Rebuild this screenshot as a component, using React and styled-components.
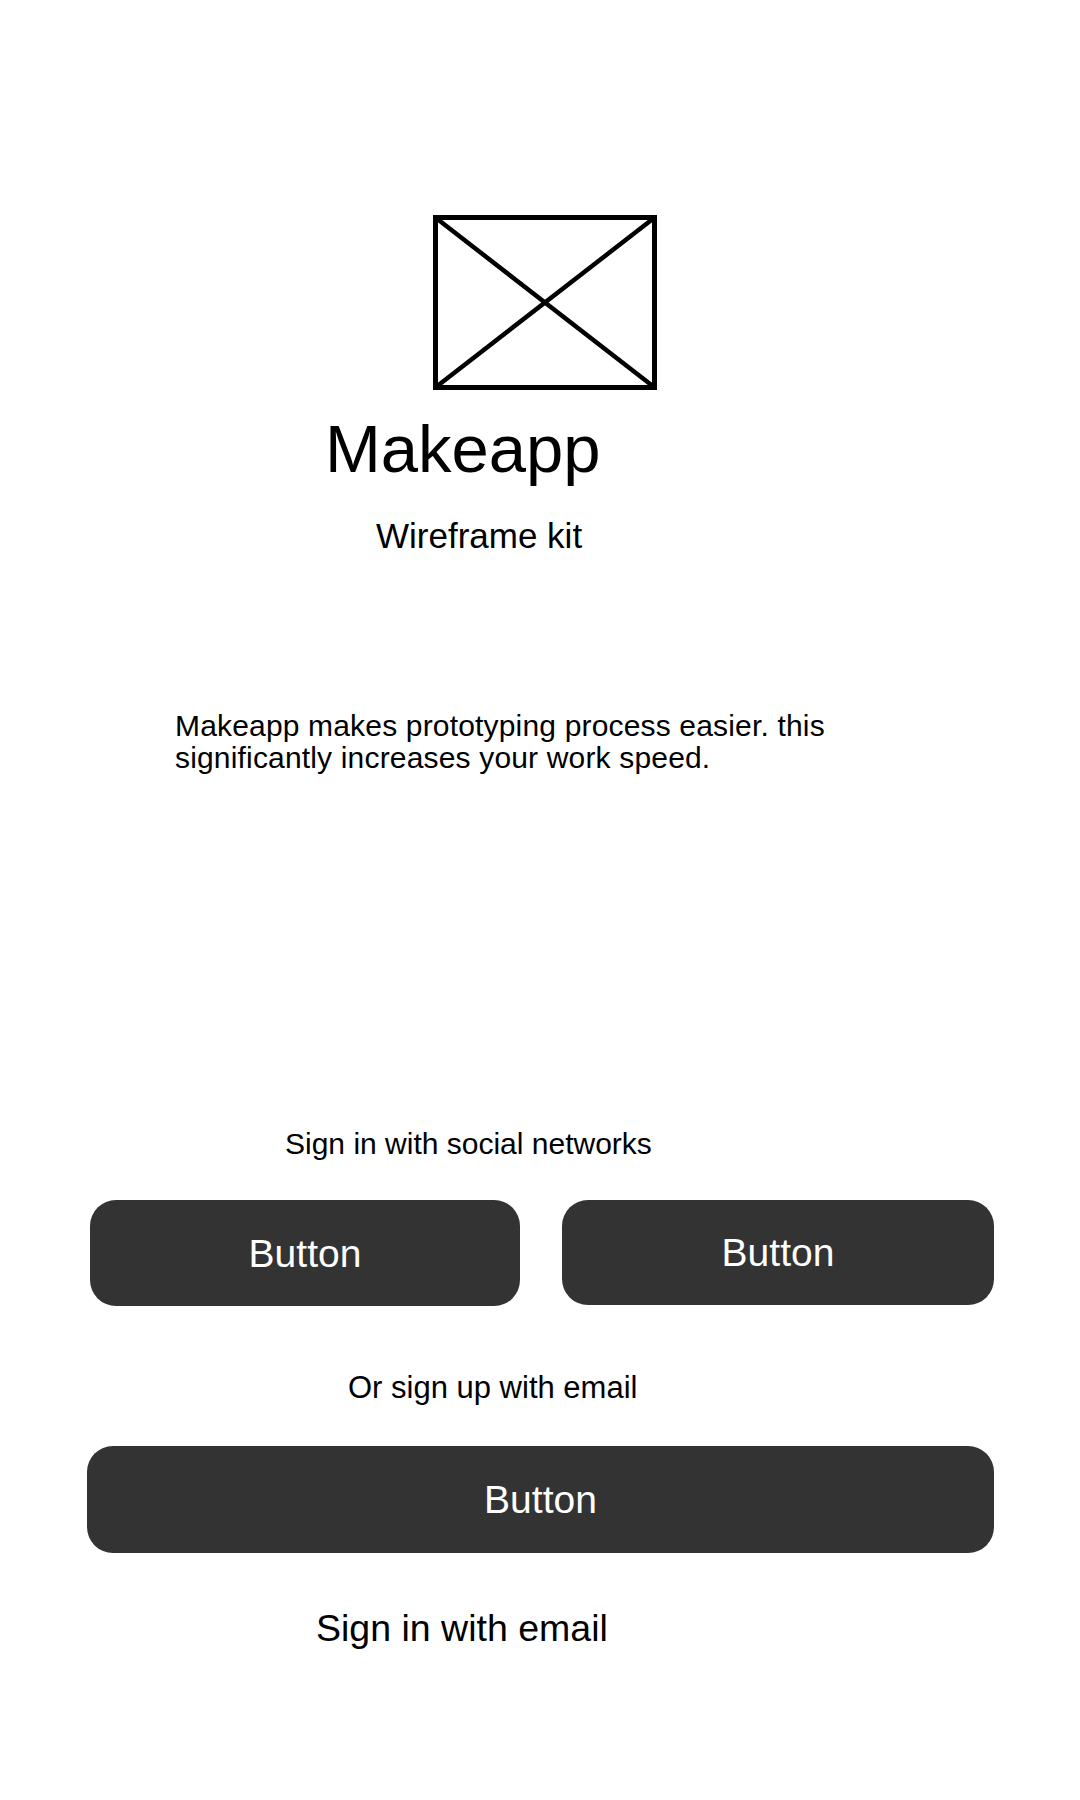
import React from "react";
import styled, { createGlobalStyle } from "styled-components";

const GlobalStyle = createGlobalStyle`
  html, body {
    margin: 0;
    padding: 0;
    background: #ffffff;
  }
  body {
    font-family: "Liberation Sans", Arial, Helvetica, sans-serif;
    color: #000000;
  }
`;

const Page = styled.div`
  width: 1080px;
  min-height: 1800px;
  display: flex;
  flex-direction: column;
  align-items: flex-start;
  padding-top: 215px;
  box-sizing: border-box;
`;

const PlaceholderWrapper = styled.div`
  margin-left: 433px;
  width: 224px;
  height: 175px;
  line-height: 0;
`;

const Title = styled.h1`
  margin: 25px 0 0 325px;
  font-size: 67px;
  line-height: 67px;
  font-weight: 400;
`;

const Subtitle = styled.p`
  margin: 36px 0 0 376px;
  font-size: 35px;
  line-height: 35px;
`;

const Description = styled.p`
  margin: 157px 0 0 175px;
  width: 720px;
  font-size: 30px;
  line-height: 32px;
  letter-spacing: 0.17px;
`;

const Caption = styled.p`
  margin: ${(p) => p.$top}px 0 0 ${(p) => p.$left}px;
  font-size: ${(p) => p.$size || 30}px;
  line-height: ${(p) => p.$size || 30}px;
  white-space: nowrap;
`;

const ButtonRow = styled.div`
  margin: 41px 0 0 90px;
  display: grid;
  grid-template-columns: 430px 432px;
  column-gap: 42px;
`;

const Button = styled.button`
  height: ${(p) => p.$height || 106}px;
  border: none;
  border-radius: 26px;
  background: #333333;
  color: #ffffff;
  font-family: "Liberation Sans", Arial, sans-serif;
  font-size: 39px;
  line-height: 1;
  padding: 0;
  cursor: pointer;
`;

const WideButton = styled(Button)`
  margin: 43px 0 0 87px;
  width: 907px;
`;

const ImagePlaceholder = () => (
  <svg width="224" height="175" viewBox="0 0 224 175">
    <rect x="2.5" y="2.5" width="219" height="170" fill="none" stroke="#000" strokeWidth="5" />
    <line x1="3" y1="3" x2="221" y2="172" stroke="#000" strokeWidth="4.5" />
    <line x1="221" y1="3" x2="3" y2="172" stroke="#000" strokeWidth="4.5" />
  </svg>
);

export default function App() {
  return (
    <>
      <GlobalStyle />
      <Page>
        <PlaceholderWrapper>
          <ImagePlaceholder />
        </PlaceholderWrapper>
        <Title>Makeapp</Title>
        <Subtitle>Wireframe kit</Subtitle>
        <Description>
          Makeapp makes prototyping process easier. this
          <br />
          significantly increases your work speed.
        </Description>

        <Caption $top={355} $left={285}>
          Sign in with social networks
        </Caption>
        <ButtonRow>
          <Button $height={106}>Button</Button>
          <Button $height={105}>Button</Button>
        </ButtonRow>

        <Caption $top={66} $left={348} $size={31}>
          Or sign up with email
        </Caption>
        <WideButton $height={107}>Button</WideButton>

        <Caption $top={57} $left={316} $size={37.5}>
          Sign in with email
        </Caption>
      </Page>
    </>
  );
}
